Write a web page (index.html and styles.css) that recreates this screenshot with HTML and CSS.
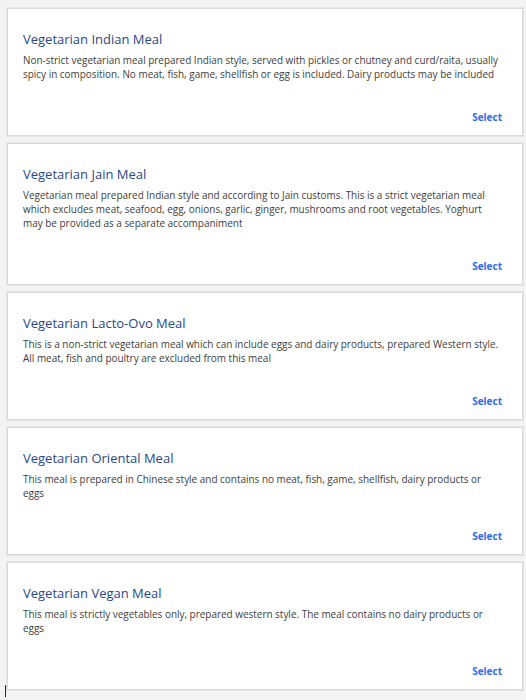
FILE: index.html
```html
<!DOCTYPE html>
<html lang="en">
<head>
<meta charset="utf-8">
<title>Meals</title>
<link rel="stylesheet" href="styles.css">
</head>
<body>
<div class="list">
  <div class="card">
    <h3 class="title">Vegetarian Indian Meal</h3>
    <p class="desc">Non-strict vegetarian meal prepared Indian style, served with pickles or chutney and curd/raita, usually spicy in composition. No meat, fish, game, shellfish or egg is included. Dairy products may be included</p>
    <div class="actions"><a class="select" href="#">Select</a></div>
  </div>
  <div class="card">
    <h3 class="title">Vegetarian Jain Meal</h3>
    <p class="desc">Vegetarian meal prepared Indian style and according to Jain customs. This is a strict vegetarian meal which excludes meat, seafood, egg, onions, garlic, ginger, mushrooms and root vegetables. Yoghurt may be provided as a separate accompaniment</p>
    <div class="actions"><a class="select" href="#">Select</a></div>
  </div>
  <div class="card">
    <h3 class="title">Vegetarian Lacto-Ovo Meal</h3>
    <p class="desc">This is a non-strict vegetarian meal which can include eggs and dairy products, prepared Western style. All meat, fish and poultry are excluded from this meal</p>
    <div class="actions"><a class="select" href="#">Select</a></div>
  </div>
  <div class="card">
    <h3 class="title">Vegetarian Oriental Meal</h3>
    <p class="desc">This meal is prepared in Chinese style and contains no meat, fish, game, shellfish, dairy products or eggs</p>
    <div class="actions"><a class="select" href="#">Select</a></div>
  </div>
  <div class="card">
    <h3 class="title">Vegetarian Vegan Meal</h3>
    <p class="desc">This meal is strictly vegetables only, prepared western style. The meal contains no dairy products or eggs</p>
    <div class="actions"><a class="select" href="#">Select</a></div>
  </div>
</div>
<span class="cursor"></span>
</body>
</html>
```
FILE: styles.css
```css
html, body {
  margin: 0;
  background: #f3f3f3;
}
body {
  padding: 8px 3px 0 7px;
  font-family: "Open Sans", Roboto, sans-serif;
  position: relative;
  min-height: 700px;
  box-sizing: border-box;
}
.list {
  display: flex;
  flex-direction: column;
  gap: 7px;
}
.card {
  background: #fff;
  border: 1px solid #d9d9d9;
  box-shadow: 0 0 0 1px #e6e6e6;
  padding: 22px 19px 11px 15px;
}
.title {
  margin: 0;
  font-size: 13px;
  line-height: 16px;
  font-weight: 400;
  color: #27478a;
}
.desc {
  margin: 6px 0 0;
  font-size: 9.95px;
  line-height: 14px;
  color: #404040;
}
.actions {
  display: flex;
  justify-content: flex-end;
  margin-top: 29px;
  padding-right: 1px;
}
.select {
  font-size: 10px;
  line-height: 14px;
  font-weight: 700;
  color: #2d6ef0;
  text-decoration: none;
}
.cursor {
  position: absolute;
  left: 5px;
  top: 685px;
  width: 1px;
  height: 12px;
  background: #222;
}
```
